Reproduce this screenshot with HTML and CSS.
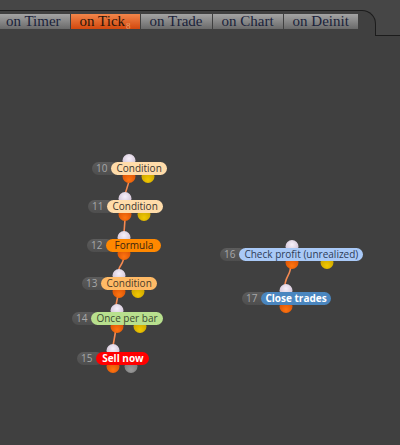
FILE: index.html
```html
<!DOCTYPE html>
<html lang="en">
<head>
  <meta charset="UTF-8">
  <title>Strategy Editor</title>
  <link rel="stylesheet" href="styles.css">
</head>
<body>
  <div class="topbar">
    <div class="strip">
      <div class="tabs">
        <div class="tab first">on Timer</div>
        <div class="tab active">on Tick<span class="count">8</span></div>
        <div class="tab">on Trade</div>
        <div class="tab">on Chart</div>
        <div class="tab">on Deinit</div>
      </div>
    </div>
    <div class="filler"></div>
  </div>

  <div class="canvas">
    <!-- wires between block outputs and inputs -->
    <svg class="wires" width="400" height="409" viewBox="0 0 400 409">
      <path d="M129 141 C129 154, 125 150, 125 162.5" />
      <path d="M125 179 C125 192, 124 188, 124 201.5" />
      <path d="M124 218 C124 231, 118 227, 118 239.5" />
      <path d="M118 256 C118 265, 115.5 266, 115.5 274.5" />
      <path d="M115.5 291 C115.5 305, 113 301, 113 314.5" />
      <path d="M291 227 C291 242, 284.5 238, 284.5 254.5" />
    </svg>

    <div class="node" style="left: 92px; top: 126px;">
      <span class="pin in"></span><span class="pin out"></span><span class="pin alt"></span>
      <span class="num">10</span><span class="label cond">Condition</span>
    </div>
    <div class="node" style="left: 88px; top: 164px;">
      <span class="pin in"></span><span class="pin out"></span><span class="pin alt"></span>
      <span class="num">11</span><span class="label cond">Condition</span>
    </div>
    <div class="node" style="left: 87px; top: 203px;">
      <span class="pin in"></span><span class="pin out"></span>
      <span class="num">12</span><span class="label formula">Formula</span>
    </div>
    <div class="node" style="left: 82px; top: 241px;">
      <span class="pin in"></span><span class="pin out"></span><span class="pin alt"></span>
      <span class="num">13</span><span class="label cond-b">Condition</span>
    </div>
    <div class="node" style="left: 72px; top: 276px;">
      <span class="pin in"></span><span class="pin out"></span><span class="pin alt"></span>
      <span class="num">14</span><span class="label once">Once per bar</span>
    </div>
    <div class="node" style="left: 77px; top: 316px;">
      <span class="pin in"></span><span class="pin out"></span><span class="pin off"></span>
      <span class="num">15</span><span class="label sell">Sell now</span>
    </div>
    <div class="node" style="left: 220px; top: 212px;">
      <span class="pin in"></span><span class="pin out"></span><span class="pin alt"></span>
      <span class="num">16</span><span class="label check">Check profit (unrealized)</span>
    </div>
    <div class="node" style="left: 242px; top: 256px;">
      <span class="pin in"></span><span class="pin out"></span>
      <span class="num">17</span><span class="label close">Close trades</span>
    </div>
  </div>
</body>
</html>
```

FILE: styles.css
```css
body {
  margin: 0;
  background-color: #404040;
  font-family: "Open Sans", Arial, sans-serif;
  overflow: hidden;
}

/* Tab strip along the top */
.topbar {
  display: flex;
  padding-top: 10px;
  background-color: #464646;
}

.strip {
  width: 376px;
  height: 26px;
  box-sizing: border-box;
  background-color: #404040;
  border-top: 1px solid #1c1c1c;
  border-right: 1px solid #1c1c1c;
  border-top-right-radius: 14px;
  overflow: hidden;
}

.filler {
  flex: 1;
  height: 26px;
  box-sizing: border-box;
  border-bottom: 1px solid #1c1c1c;
}

.tabs {
  display: flex;
  gap: 1px;
  margin-top: 3px;
  margin-left: -3px;
}

.tab {
  height: 15px;
  line-height: 15px;
  padding: 0 9px;
  font-family: "Liberation Serif", "Times New Roman", serif;
  font-size: 15px;
  color: #1a1f3a;
  background: linear-gradient(#a4a4a4, #6a6a6a);
  white-space: nowrap;
}

.tab.active {
  color: #2a1408;
  background: linear-gradient(#f2864a, #d2480e);
}

.tab .count {
  font-size: 9px;
  color: #e8a070;
  margin-left: 1px;
  position: relative;
  top: 3px;
}

/* Block canvas */
.canvas {
  position: relative;
  height: 409px;
}

.wires {
  position: absolute;
  top: 0;
  left: 0;
}

.wires path {
  fill: none;
  stroke: #f58a52;
  stroke-width: 1.6;
}

.node {
  position: absolute;
  display: flex;
  height: 13px;
  font-size: 10px;
  line-height: 13px;
  white-space: nowrap;
}

.num {
  position: relative;
  z-index: 1;
  padding: 0 11px 0 4px;
  margin-right: -7px;
  border-radius: 7px;
  background: linear-gradient(#5c5c5c, #4e4e4e);
  color: #a8a8a8;
}

.label {
  position: relative;
  z-index: 2;
  min-width: 45px;
  padding: 0 5px;
  border-radius: 7px;
  text-align: center;
}

.cond { background-color: #ffdcaa; color: #3c3530; }
.cond-b { background-color: #ffba66; color: #4a3a2a; }
.formula { background-color: #ff8800; color: #3a2410; }
.once { background-color: #b8e08e; color: #3c4a30; }
.check { background-color: #a9c9f7; color: #2e3c58; }
.sell { background-color: #ff0000; color: #fff; font-weight: bold; padding: 0 4px; }
.close { background-color: #4a86bf; color: #fff; font-weight: bold; padding: 0 4px; }

/* Connection pins */
.pin {
  position: absolute;
  z-index: 0;
  width: 13px;
  height: 13px;
  border-radius: 50%;
  transform: translateX(-50%);
}

.pin.in {
  left: 50%;
  top: -8px;
  background: radial-gradient(circle at 50% 35%, #f6f0fa, #c4b2c8);
}

.pin.out {
  left: 50%;
  top: 8px;
  background: radial-gradient(circle at 50% 75%, #ff7410, #c84400);
}

.pin.alt {
  left: 75%;
  top: 8px;
  background: radial-gradient(circle at 50% 75%, #f2c800, #b89400);
}

.pin.off {
  left: 75%;
  top: 8px;
  background: radial-gradient(circle at 50% 75%, #9a9a9a, #6e6e6e);
}
```
